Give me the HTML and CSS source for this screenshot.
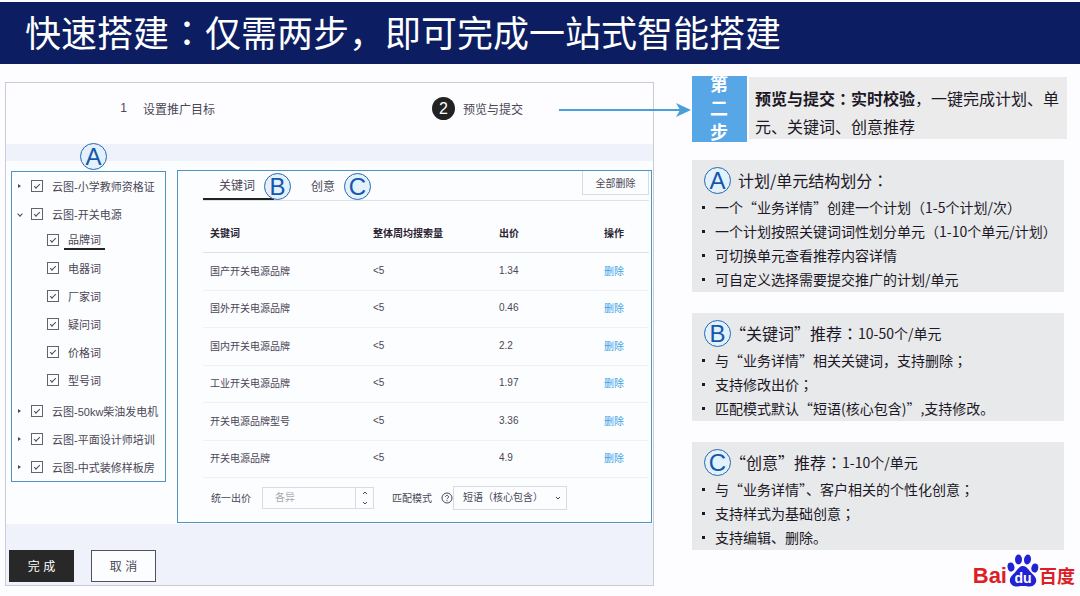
FILE: index.html
```html
<!DOCTYPE html>
<html lang="zh-CN">
<head>
  <meta charset="UTF-8">
  <meta name="viewport" content="width=device-width, initial-scale=1.0">
  <title>快速搭建</title>
  <link rel="stylesheet" href="styles.css">
</head>
<body>

  <header class="page-header">
    <h1>快速搭建<span class="mark" lang="zh-TW">：</span>仅需两步，即可完成一站式智能搭建</h1>
  </header>

  <main class="content">

    <section class="panel">
      <ol class="steps">
        <li class="step"><span class="step-num">1</span>设置推广目标</li>
        <li class="step active"><span class="step-num">2</span>预览与提交</li>
      </ol>

      <div class="workspace">
        <div class="tree-box">
          <span class="badge tree-badge">A</span>
          <ul class="tree">
            <li><label class="closed"><input type="checkbox" checked>云图-小学教师资格证</label></li>
            <li>
              <label class="open"><input type="checkbox" checked>云图-开关电源</label>
              <ul class="subtree">
                <li><label><input type="checkbox" checked><span class="current">品牌词</span></label></li>
                <li><label><input type="checkbox" checked>电器词</label></li>
                <li><label><input type="checkbox" checked>厂家词</label></li>
                <li><label><input type="checkbox" checked>疑问词</label></li>
                <li><label><input type="checkbox" checked>价格词</label></li>
                <li><label><input type="checkbox" checked>型号词</label></li>
              </ul>
            </li>
            <li><label class="closed"><input type="checkbox" checked>云图-50kw柴油发电机</label></li>
            <li><label class="closed"><input type="checkbox" checked>云图-平面设计师培训</label></li>
            <li><label class="closed"><input type="checkbox" checked>云图-中式装修样板房</label></li>
          </ul>
        </div>

        <div class="keyword-box">
          <div class="tabs">
            <button type="button" class="tab selected">关键词</button>
            <span class="badge">B</span>
            <button type="button" class="tab">创意</button>
            <span class="badge">C</span>
            <button type="button" class="delete-all">全部删除</button>
          </div>

          <table class="keywords">
            <thead>
              <tr><th class="col-word">关键词</th><th class="col-volume">整体周均搜索量</th><th class="col-price">出价</th><th>操作</th></tr>
            </thead>
            <tbody>
              <tr><td>国产开关电源品牌</td><td>&lt;5</td><td>1.34</td><td><a href="#">删除</a></td></tr>
              <tr><td>国外开关电源品牌</td><td>&lt;5</td><td>0.46</td><td><a href="#">删除</a></td></tr>
              <tr><td>国内开关电源品牌</td><td>&lt;5</td><td>2.2</td><td><a href="#">删除</a></td></tr>
              <tr><td>工业开关电源品牌</td><td>&lt;5</td><td>1.97</td><td><a href="#">删除</a></td></tr>
              <tr><td>开关电源品牌型号</td><td>&lt;5</td><td>3.36</td><td><a href="#">删除</a></td></tr>
              <tr><td>开关电源品牌</td><td>&lt;5</td><td>4.9</td><td><a href="#">删除</a></td></tr>
            </tbody>
          </table>

          <div class="bid-form">
            <label for="bid">统一出价</label>
            <div class="number-field">
              <input type="text" id="bid" placeholder="各异">
              <div class="spinner">
                <button type="button" aria-label="增加"><svg width="6" height="4" viewBox="0 0 6 4"><path d="M1 3l2-2 2 2"/></svg></button>
                <button type="button" aria-label="减少"><svg width="6" height="4" viewBox="0 0 6 4"><path d="M1 1l2 2 2-2"/></svg></button>
              </div>
            </div>
            <label for="match">匹配模式</label>
            <svg class="help" width="12" height="12" viewBox="0 0 12 12"><circle cx="6" cy="6" r="5"/><path d="M4.5 4.8a1.5 1.5 0 1 1 2.3 1.3q-.8.4-.8 1.1M6 8.2v1"/></svg>
            <div class="select-field">
              <select id="match">
                <option>短语（核心包含）</option>
              </select>
              <svg width="6" height="4" viewBox="0 0 6 4"><path d="M1 1l2 2 2-2"/></svg>
            </div>
          </div>
        </div>
      </div>

      <div class="actions">
        <button type="button" class="btn primary">完 成</button>
        <button type="button" class="btn">取 消</button>
      </div>

      <svg class="arrow" width="132" height="16" viewBox="0 0 132 16">
        <path d="M0 8h122" stroke="#4a9fd8" stroke-width="2"/>
        <path d="M117 1l15 7-15 7 4-7z" fill="#4a9fd8"/>
      </svg>
    </section>

    <aside class="notes">
      <div class="intro">
        <div class="intro-step">第二步</div>
        <p class="intro-text"><b>预览与提交<span class="mark" lang="zh-TW">：</span>实时校验</b>，一键完成计划、单元、关键词、创意推荐</p>
      </div>

      <section class="note">
        <h2><span class="badge">A</span>计划/单元结构划分<span class="mark" lang="zh-TW">：</span></h2>
        <ul>
          <li>一个“业务详情”创建一个计划（1-5个计划/次）</li>
          <li>一个计划按照关键词词性划分单元（1-10个单元/计划）</li>
          <li>可切换单元查看推荐内容详情</li>
          <li>可自定义选择需要提交推广的计划/单元</li>
        </ul>
      </section>

      <section class="note">
        <h2><span class="badge">B</span>“关键词”推荐<span class="mark" lang="zh-TW">：</span><small>10-50个/单元</small></h2>
        <ul>
          <li>与“业务详情”相关关键词，支持删除<span class="mark" lang="zh-TW">；</span></li>
          <li>支持修改出价<span class="mark" lang="zh-TW">；</span></li>
          <li>匹配模式默认“短语(核心包含)”,支持修改。</li>
        </ul>
      </section>

      <section class="note">
        <h2><span class="badge">C</span>“创意”推荐<span class="mark" lang="zh-TW">：</span><small>1-10个/单元</small></h2>
        <ul>
          <li>与“业务详情”、客户相关的个性化创意<span class="mark" lang="zh-TW">；</span></li>
          <li>支持样式为基础创意<span class="mark" lang="zh-TW">；</span></li>
          <li>支持编辑、删除。</li>
        </ul>
      </section>

      <div class="logo">
        <span class="logo-bai">Bai</span>
        <svg width="32" height="34" viewBox="0 0 32 34">
          <g fill="#2222d4">
            <ellipse cx="4" cy="13" rx="3.4" ry="4.6" transform="rotate(-12 4 13)"/>
            <ellipse cx="11.5" cy="5.5" rx="3.5" ry="5"/>
            <ellipse cx="20.5" cy="5.5" rx="3.5" ry="5" transform="rotate(8 20.5 5.5)"/>
            <ellipse cx="27.8" cy="14" rx="3.4" ry="4.6" transform="rotate(12 27.8 14)"/>
            <path d="M16 12c4 0 5.5 4 8.5 7 3 2.8 5.5 5 4.5 9-1 3.7-5 5-8 4.500-3-.6-7-.6-10 0-3 .5-7-.8-8-4.500-1-4 1.500-6.200 4.500-9 3-3 4.500-7 8.500-7z"/>
          </g>
          <text x="16" y="29" text-anchor="middle">du</text>
        </svg>
        <span class="logo-name">百度</span>
      </div>
    </aside>

  </main>

</body>
</html>
```

FILE: styles.css
```css
* {
  box-sizing: border-box;
}
body {
  margin: 0;
  font-family: "Liberation Sans", "Noto Sans CJK SC", sans-serif;
  background-color: #fdfdff;
  color: #1c1826;
}
h1, h2, p, ul, ol {
  margin: 0;
  padding: 0;
  font-weight: normal;
}
ul, ol {
  list-style: none;
}
button, input, select {
  font-family: inherit;
  color: inherit;
  margin: 0;
  padding: 0;
  border: none;
  background: none;
}
svg {
  fill: none;
}

/* centred full-width punctuation */
.mark {
  font-family: "Noto Sans CJK TC", sans-serif;
}

.page-header {
  margin-top: 2px;
  padding: 0 25px;
  background-color: #0c1e61;
  color: #fff;
}
.page-header h1 {
  height: 62px;
  font-family: "Noto Sans CJK SC", sans-serif;
  font-size: 36px;
  line-height: 58px;
}

.content {
  display: flex;
  align-items: flex-start;
  padding: 12px 13px 0 5px;
}

.badge {
  flex: none;
  width: 27px;
  height: 27px;
  border: 1px solid #2467b0;
  border-radius: 50%;
  background-color: #e3f1fc;
  color: #1457ae;
  font-family: "Liberation Sans", sans-serif;
  font-size: 24px;
  line-height: 26px;
  text-align: center;
}

/* left panel */
.panel {
  position: relative;
  flex: 1;
  margin-top: 6px;
  border: 1px solid #c9ccd4;
  background-color: #eff2fa;
  color: #4b4655;
}
.steps {
  display: flex;
  align-items: center;
  height: 61px;
  padding-bottom: 10px;
  background-color: #fdfdff;
  font-size: 12px;
}
.step {
  display: flex;
  align-items: center;
  flex: 1;
  gap: 8px;
  padding-left: 106px;
}
.step.active {
  padding-left: 99px;
}
.step-num {
  width: 23px;
  line-height: 23px;
  border-radius: 50%;
  text-align: center;
}
.step.active .step-num {
  background-color: #222;
  color: #fff;
  font-size: 16px;
}
.workspace {
  display: flex;
  align-items: flex-start;
  gap: 11px;
  margin-top: 17px;
  padding: 9px 1px 1px 5px;
  background-color: #fcfdff;
}

.tree-box {
  position: relative;
  flex: none;
  width: 155px;
  margin-top: 1px;
  border: 1px solid #4f93c0;
}
.tree-badge {
  position: absolute;
  left: 68px;
  top: -29px;
}
.tree label {
  display: flex;
  align-items: center;
  gap: 9px;
  height: 28px;
  padding-left: 6px;
  font-size: 11px;
  white-space: nowrap;
}
.tree label::before {
  content: "";
  box-sizing: border-box;
  flex: none;
  width: 4px;
  height: 4px;
}
.tree label.closed::before {
  border-left: 3px solid #4b4655;
  border-top: 2px solid transparent;
  border-bottom: 2px solid transparent;
}
.tree label.open::before {
  border-right: 1px solid #4b4655;
  border-bottom: 1px solid #4b4655;
  transform: rotate(45deg);
}
.tree input {
  appearance: none;
  display: flex;
  flex: none;
  justify-content: center;
  width: 12px;
  height: 12px;
  border: 1px solid #66606f;
}
.tree input:checked::before {
  content: "";
  width: 5px;
  height: 2px;
  margin-top: 3px;
  border-left: 1px solid #4b4655;
  border-bottom: 1px solid #4b4655;
  transform: rotate(-45deg);
}
.subtree {
  margin: -2px 0 3px;
}
.subtree label {
  padding-left: 22px;
}
.current {
  margin: 0 -4px;
  padding: 0 4px 1px;
  border-bottom: 2px solid #222;
}

.keyword-box {
  flex: 1;
  padding: 0 2px 12px 25px;
  border: 1px solid #4f93c0;
  font-size: 10px;
}
.tabs {
  display: flex;
  height: 30px;
  border-bottom: 1px solid #dfe1e6;
}
.tabs .badge {
  margin-top: 2px;
}
.tab {
  padding: 0 9px 0 20px;
  font-size: 12px;
}
.tab.selected {
  margin-right: -10px;
  padding: 0 19px 0 16px;
  border-bottom: 2px solid #222;
}
.delete-all {
  width: 67px;
  height: 24px;
  margin-left: auto;
  border: 1px solid #d9dbe1;
  border-top: none;
  font-size: 10px;
}

.keywords {
  width: 100%;
  border-collapse: collapse;
  table-layout: fixed;
}
.keywords th {
  height: 51px;
  padding: 12px 0 0 7px;
  border-bottom: 1px solid #dfe1e6;
  color: #2a2433;
  text-align: left;
}
.keywords td {
  height: 38px;
  padding: 0 0 2px 7px;
  border-bottom: 1px solid #f0f1f5;
}
.keywords tr:nth-child(even) td {
  height: 37px;
}
.col-word {
  width: 163px;
}
.col-volume {
  width: 126px;
}
.col-price {
  width: 105px;
}
.keywords a {
  color: #3fa3e6;
  text-decoration: none;
}

.bid-form {
  display: flex;
  align-items: center;
  margin-top: 8px;
  padding-left: 8px;
}
.bid-form svg {
  stroke: #4b4655;
}
.number-field {
  display: flex;
  width: 112px;
  height: 22px;
  margin: 0 18px 0 11px;
  border: 1px solid #d9dbe1;
}
.number-field input {
  flex: 1;
  min-width: 0;
  padding-left: 12px;
  font-size: 10px;
}
.number-field input::placeholder {
  color: #a9a8b0;
}
.spinner {
  display: flex;
  flex-direction: column;
  width: 18px;
  border-left: 1px solid #d9dbe1;
}
.spinner button {
  display: flex;
  flex: 1;
  align-items: center;
  justify-content: center;
}
.help {
  margin-left: 9px;
}
.select-field {
  display: flex;
  align-items: center;
  width: 114px;
  height: 24px;
  padding-right: 5px;
  border: 1px solid #d9dbe1;
}
.select-field select {
  appearance: none;
  flex: 1;
  min-width: 0;
  height: 22px;
  padding-left: 9px;
  font-size: 10px;
}

.actions {
  display: flex;
  gap: 17px;
  padding: 26px 3px 3px;
}
.btn {
  width: 65px;
  height: 32px;
  border: 1px solid #55515c;
  background-color: #fcfdff;
  font-size: 12px;
}
.btn.primary {
  border-color: #282828;
  background-color: #282828;
  color: #fff;
}

/* pointer from step 2 to the notes */
.arrow {
  position: absolute;
  right: -38px;
  top: 19px;
}

/* right column */
.notes {
  display: flex;
  flex-direction: column;
  gap: 21px;
  width: 375px;
  margin-left: 38px;
}
.intro {
  display: flex;
  align-items: flex-start;
  gap: 2px;
  margin-bottom: -3px;
}
.intro-step {
  display: flex;
  align-items: center;
  width: 55px;
  height: 66px;
  padding: 0 18px;
  overflow: hidden;
  background-color: #57a6e6;
  color: #fff;
  font-size: 18px;
  font-weight: bold;
  line-height: 24px;
}
.intro-text {
  flex: 1;
  height: 62px;
  margin-top: 1px;
  padding: 7px 6px 0;
  background-color: #ebebec;
  font-size: 16px;
  line-height: 28px;
}
.note {
  margin-right: 3px;
  padding: 5px 10px 1px;
  background-color: #e8e9eb;
}
.note h2 {
  display: flex;
  align-items: center;
  height: 30px;
  padding-left: 2px;
  font-size: 16px;
  text-spacing-trim: trim-start;
}
.note h2 .badge {
  margin-right: 7px;
}
.note h2 small {
  font-size: 14px;
}
.note li {
  display: flex;
  align-items: center;
  font-size: 14px;
  line-height: 24px;
  white-space: nowrap;
}
.note li::before {
  content: "";
  flex: none;
  width: 3px;
  height: 3px;
  margin-right: 10px;
  background-color: #1c1826;
}
.note, .intro-text {
  font-family: "Noto Sans CJK SC", sans-serif;
}

.logo {
  display: flex;
  align-items: flex-end;
  align-self: flex-end;
  margin: -17px -8px 0 0;
  color: #dc1f26;
  font-weight: bold;
}
.logo-bai {
  font-size: 22px;
  line-height: 24px;
}
.logo-name {
  font-size: 18px;
  line-height: 22px;
}
.logo text {
  fill: #fff;
  font-size: 14px;
}
```
